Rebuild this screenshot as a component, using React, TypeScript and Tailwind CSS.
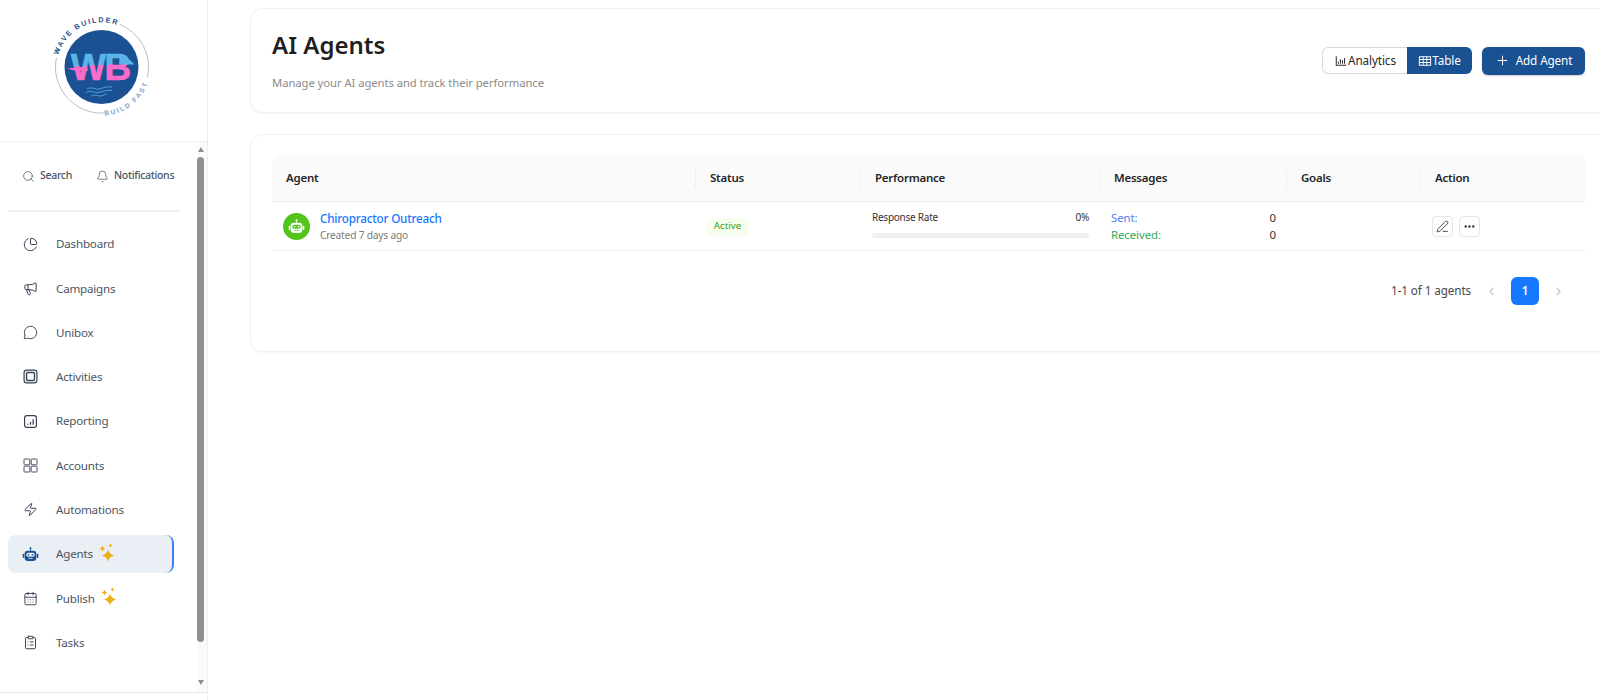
import { Bell, CalendarDays, ChartPie, ChevronLeft, ChevronRight, ClipboardList, Ellipsis, Megaphone, MessageCircle, PenLine, Plus, Search, Zap } from "lucide-react";
import { AiOutlineBarChart, AiOutlineTable } from "react-icons/ai";
import type { ReactNode } from "react";

function Logo() {
    return (
        <svg width="110" height="110" viewBox="0 0 110 110">
            <defs>
                <linearGradient id="wb" gradientUnits="userSpaceOnUse" x1="54.8" y1="45" x2="56" y2="65">
                    <stop offset="0.5" stopColor="#5ab4e8" />
                    <stop offset="0.5" stopColor="#f96cc8" />
                </linearGradient>
                <path id="arcTop" d="M 13.500 45 A 44.500 44.500 0 0 1 80 19" fill="none" />
                <path id="arcBottom" d="M 59.500 105.500 A 48.700 48.700 0 0 0 104.500 67" fill="none" />
            </defs>
            <path d="M 11.500 47.500 A 46 46 0 0 0 59 103" fill="none" stroke="#a8adb4" strokeWidth="0.8" />
            <path d="M 75 14.500 A 46 46 0 0 1 102.500 67" fill="none" stroke="#a8adb4" strokeWidth="0.8" />
            <circle cx="56.500" cy="57" r="37" fill="#1a5192" />
            <text fontFamily="'Liberation Sans', sans-serif" fontSize="7.200" fontWeight="700" letterSpacing="1.700" fill="#1a5192">
                <textPath href="#arcTop">WAVE BUILDER</textPath>
            </text>
            <text fontFamily="'Liberation Sans', sans-serif" fontSize="6.800" fontWeight="700" letterSpacing="1.800" fill="#7ea4c9">
                <textPath href="#arcBottom">BUILD FAST</textPath>
            </text>
            <text x="55" y="70" textAnchor="middle" fontFamily="'Liberation Sans', sans-serif" fontSize="37.500" fontWeight="700" letterSpacing="-2" stroke="url(#wb)" strokeWidth="0.500" fill="url(#wb)">WB</text>
            <polygon points="22,58.500 42,56.500 43,61 29,60.500" fill="#f96cc8" />
            <polygon points="75,43.500 81,46 89.500,54.500 74,54.500" fill="#5ab4e8" />
            <path d="M42 79c5-3 8 1 12 0s8-3 13-2M41 82.500c5-3 9 1 13 0s8-3 13-2M46 86c4-2 6 0 9 0s5-2 7-2" fill="none" stroke="#5ab4e8" strokeWidth="0.800" />
        </svg>
    );
}

function Robot({ size, color, visor }: { size: number; color: string; visor: string }) {
    return (
        <svg width={size} height={size} viewBox="0 0 20 20">
            <circle cx="10" cy="2.600" r="1.200" fill={color} />
            <rect x="9.500" y="3" width="1" height="3" fill={color} />
            <rect x="3" y="5.500" width="14" height="12" rx="4" fill={color} />
            <rect x="0.800" y="9" width="1.600" height="5" rx="0.800" fill={color} />
            <rect x="17.600" y="9" width="1.600" height="5" rx="0.800" fill={color} />
            <rect x="5" y="8" width="10" height="4.600" rx="2.300" fill={visor} />
            <circle cx="7.600" cy="10.300" r="1" fill={color} />
            <circle cx="12.400" cy="10.300" r="1" fill={color} />
            <rect x="7.500" y="14.300" width="5" height="1.100" rx="0.500" fill={visor} />
        </svg>
    );
}

function Sparkles() {
    return (
        <svg width="16" height="19" viewBox="0 0 16 19" fill="#e8b015">
            <path d="M9 6.500Q10 11 15 12.500Q10 14 9 18.500Q8 14 3 12.500Q8 11 9 6.500z" />
            <path d="M3.500 2.500Q4 5 6.500 5.500Q4 6 3.500 8.500Q3 6 0.500 5.500Q3 5 3.500 2.500z" />
            <path d="M11.500 0.500Q11.800 2 13.500 2.500Q11.800 3 11.500 4.500Q11.200 3 9.500 2.500Q11.200 2 11.500 0.500z" />
        </svg>
    );
}

function ActivitiesIcon() {
    return (
        <svg width="15" height="15" viewBox="0 0 14 14" fill="none" stroke="#374151" strokeWidth="1.100">
            <rect x="1" y="1" width="12" height="12" rx="2.500" />
            <rect x="3.300" y="3.300" width="7.400" height="7.400" rx="1" strokeWidth="1.300" />
        </svg>
    );
}

function ReportingIcon() {
    return (
        <svg width="15" height="15" viewBox="0 0 14 14" fill="none" stroke="#374151" strokeWidth="1.100">
            <rect x="1.500" y="1.500" width="11" height="11" rx="2" />
            <path d="M4.500 10V9M7 10V7.500M9.500 10V5" strokeWidth="1.200" />
        </svg>
    );
}

function AccountsIcon() {
    return (
        <svg width="15" height="15" viewBox="0 0 15 15" fill="none" stroke="#4b5563" strokeWidth="1">
            <rect x="1" y="1" width="5.800" height="5.800" rx="0.600" />
            <rect x="8.200" y="1" width="5.800" height="5.800" rx="0.600" />
            <rect x="1" y="8.200" width="5.800" height="5.800" rx="0.600" />
            <rect x="8.200" y="8.200" width="5.800" height="5.800" rx="0.600" />
        </svg>
    );
}

const navItems: { label: string; icon: ReactNode; active?: boolean; spark?: boolean }[] = [
    { label: "Dashboard", icon: <ChartPie size={15} strokeWidth={1.6} /> },
    { label: "Campaigns", icon: <Megaphone size={15} strokeWidth={1.6} /> },
    { label: "Unibox", icon: <MessageCircle size={15} strokeWidth={1.5} /> },
    { label: "Activities", icon: <ActivitiesIcon /> },
    { label: "Reporting", icon: <ReportingIcon /> },
    { label: "Accounts", icon: <AccountsIcon /> },
    { label: "Automations", icon: <Zap size={15} strokeWidth={1.6} /> },
    { label: "Agents", icon: <Robot size={17} color="#1a5192" visor="#e9eff4" />, active: true, spark: true },
    { label: "Publish", icon: <CalendarDays size={15} strokeWidth={1.5} />, spark: true },
    { label: "Tasks", icon: <ClipboardList size={15} strokeWidth={1.6} /> },
];

function Sidebar() {
    return (
        <aside className="w-[208px] h-[700px] shrink-0 bg-white border-r border-[#eceef5] flex flex-col">
            {/* Logo */}
            <div className="h-[142px] shrink-0 border-b border-[#f0f1f6] pl-[45px] pt-[10px]">
                <Logo />
            </div>

            <div className="h-[551px] shrink-0 border-b border-[#e6e8ee] flex">
                <div className="w-[197px] shrink-0">
                    <div className="flex items-center h-[20px] mt-[24px] text-[10.500px] tracking-[-0.3px] font-medium text-[#4b5563] pl-[22px]">
                        <Search size={13} strokeWidth={1.4} />
                        <span className="ml-[5px]">Search</span>
                        <Bell size={13} strokeWidth={1.4} className="ml-[24px]" />
                        <span className="ml-[5px]">Notifications</span>
                    </div>
                    <div className="h-[2px] w-[172px] ml-[8px] mt-[24px] bg-[#f0f1f6]" />

                    {/* Nav */}
                    <nav className="mt-[13px] flex flex-col gap-[6.300px] w-[166px] ml-[8px]">
                        {navItems.map((item) => (
                            <a
                                key={item.label}
                                href="#"
                                className={
                                    item.active
                                        ? "h-[38px] flex items-center rounded-lg bg-[#e9eff4] border-r-2 border-[#3b82f6] text-[11.600px] tracking-[-0.2px] text-[#4b5563]"
                                        : "h-[38px] flex items-center rounded-lg text-[11.600px] tracking-[-0.2px] text-[#4b5563]"
                                }
                            >
                                <span className="w-[48px] pr-[4px] flex justify-center text-[#374151]">{item.icon}</span>
                                <span>{item.label}</span>
                                {item.spark && (
                                    <span className="ml-[6px] -mt-[3px]">
                                        <Sparkles />
                                    </span>
                                )}
                            </a>
                        ))}
                    </nav>
                </div>

                {/* Scrollbar */}
                <div className="w-[10px] shrink-0 bg-[#fafafa] flex flex-col items-start">
                    <div className="w-0 h-0 mt-[5px] ml-[0.500px] border-x-[3.500px] border-x-transparent border-b-[5px] border-b-[#8f8f8f]" />
                    <div className="w-[7px] h-[485px] mt-[5px] rounded-[4px] bg-[#8f8f8f]" />
                    <div className="w-0 h-0 mt-[38px] ml-[0.500px] border-x-[3.500px] border-x-transparent border-t-[5px] border-t-[#8f8f8f]" />
                </div>
            </div>
        </aside>
    );
}

function Header() {
    return (
        <div className="w-[1363px] h-[105px] rounded-xl border border-[#f0f0f0] shadow-[0_1px_2px_rgba(0,0,0,0.04)] flex items-center justify-between pl-[21px] pr-[27px]">
            <div>
                <h1 className="text-[24px] leading-[32px] font-semibold text-[#1f1f1f] -mt-[1px]">AI Agents</h1>
                <p className="mt-[14px] text-[11.300px] tracking-[-0.08px] leading-[16px] text-[#8c8c8c]">Manage your AI agents and track their performance</p>
            </div>
            <div className="flex items-center gap-[10px]">
                <div className="flex h-[27px] text-[11.700px] tracking-[-0.1px]">
                    <button className="w-[85px] flex items-center justify-center rounded-l-md border border-r-0 border-[#d9d9d9] text-[#262626] bg-white">
                        <AiOutlineBarChart size={14} />
                        Analytics
                    </button>
                    <button className="w-[65px] flex items-center justify-center rounded-r-md bg-[#1a5192] text-white">
                        <AiOutlineTable size={14} />
                        Table
                    </button>
                </div>
                <button className="w-[103px] h-[28px] flex items-center justify-center gap-[6px] rounded-md bg-[#1a5192] text-white text-[11.700px] tracking-[-0.1px] shadow-[0_1px_2px_rgba(0,0,0,0.2)]">
                    <Plus size={15} strokeWidth={1.6} />
                    Add Agent
                </button>
            </div>
        </div>
    );
}

function Divider() {
    return <span className="w-px h-[19px] bg-[#efefef] shrink-0" />;
}

const columns = ["Agent", "Status", "Performance", "Messages", "Goals", "Action"];

function AgentsTable() {
    return (
        <div className="w-[1363px] h-[218px] mt-[21px] rounded-xl border border-[#f0f0f0] shadow-[0_1px_2px_rgba(0,0,0,0.04)] pl-[21px] pt-[20px]">
            <div className="w-[1313px] text-[12px]">
                <div className="h-[47px] grid grid-cols-[423px_165px_239px_187px_134px_165px] items-center bg-[#fafafa] rounded-t-lg border-b border-[#f0f0f0] font-semibold text-[11.500px] tracking-[-0.25px] text-[#262626]">
                    {columns.map((col, i) => (
                        <div key={col} className="flex items-center">
                            {i > 0 && <Divider />}
                            <span className="ml-[13px] pl-px">{col}</span>
                        </div>
                    ))}
                </div>

                <div className="h-[49px] grid grid-cols-[423px_165px_239px_187px_134px_165px] items-center border-b border-[#f0f0f0]">
                    <div className="flex items-center pl-[11px]">
                        <span className="w-[27px] h-[27px] rounded-full bg-[#52c41a] flex items-center justify-center">
                            <Robot size={17} color="#ffffff" visor="#52c41a" />
                        </span>
                        <div className="ml-[10px] pt-[1px]">
                            <div className="text-[11.700px] tracking-[-0.2px] leading-[16px] font-medium text-[#1677ff]">Chiropractor Outreach</div>
                            <div className="text-[10.200px] tracking-[-0.2px] leading-[15px] mt-[2px] text-[#7a7a7a]">Created 7 days ago</div>
                        </div>
                    </div>
                    <div className="pl-[12px]">
                        <span className="inline-flex items-center justify-center w-[41px] h-[18px] rounded bg-[#f6ffed] text-[9.800px] text-[#389e0d]">Active</span>
                    </div>
                    <div className="pl-[12px] pr-[10px] -mt-[5px]">
                        <div className="flex justify-between text-[10px] tracking-[-0.25px] leading-[14px] text-[#333333]">
                            <span>Response Rate</span>
                            <span>0%</span>
                        </div>
                        <div className="h-[5px] mt-[9px] rounded-full bg-[#f0f0f0]" />
                    </div>
                    <div className="pl-[12px] pr-[10px] -mt-[1px] text-[11.400px] tracking-[-0.08px] leading-[17px]">
                        <div className="flex justify-between">
                            <span className="text-[#4f7df0]">Sent:</span>
                            <span className="text-[#333333]">0</span>
                        </div>
                        <div className="flex justify-between">
                            <span className="text-[#34a853]">Received:</span>
                            <span className="text-[#333333]">0</span>
                        </div>
                    </div>
                    <div />
                    <div className="flex items-center gap-[6px] pl-[12px]">
                        <button className="w-[21px] h-[21px] flex items-center justify-center rounded border border-[#e5e5e5] text-[#262626]">
                            <PenLine size={13} strokeWidth={1.5} />
                        </button>
                        <button className="w-[21px] h-[21px] flex items-center justify-center rounded border border-[#e5e5e5] text-[#333333]">
                            <Ellipsis size={13} strokeWidth={2.4} />
                        </button>
                    </div>
                </div>

                {/* Pagination */}
                <div className="flex items-center justify-end mt-[26px] pr-[20px] text-[11.700px] tracking-[-0.1px] text-[#4a4a4a]">
                    <span>1-1 of 1 agents</span>
                    <ChevronLeft size={13} className="ml-[14px] text-[#c4c4c4]" />
                    <span className="w-[28px] h-[28px] ml-[13px] flex items-center justify-center rounded-md bg-[#1677ff] text-white font-semibold">1</span>
                    <ChevronRight size={13} className="ml-[13px] text-[#c4c4c4]" />
                </div>
            </div>
        </div>
    );
}

export default function App() {
    return (
        <div className="w-[1600px] h-[700px] overflow-hidden bg-white flex font-['Noto_Sans',sans-serif]">
            <Sidebar />
            <main className="flex-1 pl-[42px] pt-[8px]">
                <Header />
                <AgentsTable />
            </main>
        </div>
    );
}
